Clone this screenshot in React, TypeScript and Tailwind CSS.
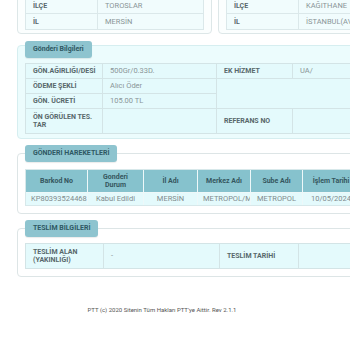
const font = { fontFamily: "Roboto, 'Noto Sans', sans-serif" };

function Legend({ title, className = "" }: { title: string; className?: string }) {
  return (
    <div
      className={`flex h-[17px] w-fit items-center rounded-[3px] bg-[#8ec4cf] px-[8px] text-[7px] font-bold text-[#2f5863] shadow-[0_1px_1px_rgba(0,0,0,0.08)] ${className}`}
    >
      {title}
    </div>
  );
}

const label = "flex items-center bg-[#e4fafc] px-[7px] text-[7px] font-bold leading-[8px] text-[#58686b]";
const value = "flex items-center bg-[#e4fafc] px-[7px] text-[7.5px] text-[#8a9597]";

function AddressCard({ ilce, il }: { ilce: string; il: string }) {
  return (
    <div className="w-[195px] shrink-0 overflow-hidden rounded-b-[4px] border border-[#dde7e8] bg-[#fbfefe] px-[7px] pt-[8px] pb-[3px]">
      <div className="grid grid-cols-[71px_1fr] gap-px border border-[#dbe8ea] bg-[#dbe8ea]">
        <div className="h-[15px] bg-[#f1fcfd]" />
        <div className="h-[15px] bg-[#f1fcfd]" />
        <div className={`${label} h-[15px] bg-[#f1fcfd]`}>İLÇE</div>
        <div className={`${value} h-[15px] bg-[#f1fcfd]`}>{ilce}</div>
        <div className={`${label} h-[15px] bg-[#f1fcfd]`}>İL</div>
        <div className={`${value} h-[15px] whitespace-nowrap bg-[#f1fcfd]`}>{il}</div>
      </div>
    </div>
  );
}

const moves = [
  ["KP80393524468", "Kabul Edildi", "MERSİN", "METROPOL/MERSİN", "METROPOL", "10/05/2024", ""],
];

export default function App() {
  return (
    <div className="h-[350px] w-[350px] overflow-hidden bg-white" style={font}>
      <div className="w-[440px] pl-[17px]">
        <div className="-mt-[28px] flex gap-[6px]">
          <AddressCard ilce="TOROSLAR" il="MERSİN" />
          <AddressCard ilce="KAĞITHANE" il="İSTANBUL(AVRUPA)" />
        </div>

        <div className="mt-[11px] rounded-[4px] border border-[#d6eef0] bg-[#ecfcfd] px-[7px] pb-[4px]">
          <Legend title="Gönderi Bilgileri" className="-mt-[5px]" />
          <div className="mt-[5px] grid grid-cols-[76px_113px_75px_1fr] grid-rows-[14px_14px_14px_24px] gap-px border border-[#d3e4e6] bg-[#d3e4e6]">
            <div className={label}>GÖN.AĞIRLIĞI/DESİ</div>
            <div className={value}>500Gr/0.33D.</div>
            <div className={label}>EK HİZMET</div>
            <div className={value}>UA/</div>
            <div className={label}>ÖDEME ŞEKLİ</div>
            <div className={value}>Alıcı Öder</div>
            <div className="col-span-2 row-span-2 bg-[#e4fafc]" />
            <div className={label}>GÖN. ÜCRETİ</div>
            <div className={value}>105.00 TL</div>
            <div className={label}>ÖN GÖRÜLEN TES. TAR</div>
            <div className={value} />
            <div className={label}>REFERANS NO</div>
            <div className={value} />
          </div>
        </div>

        <div className="mt-[14px] rounded-[4px] border border-[#dde5e6] bg-white px-[7px] pb-[7px]">
          <Legend title="GÖNDERİ HAREKETLERİ" className="-mt-[9px]" />
          <div className="mt-[7px] grid grid-cols-[61px_55px_53px_52px_51px_56px_1fr] gap-px border border-[#d7e8ea] bg-[#eef8f9]">
            {["Barkod No", "Gonderi Durum", "İl Adı", "Merkez Adı", "Sube Adı", "İşlem Tarihi", "İşlem Saati"].map((h) => (
              <div
                key={h}
                className="flex h-[22px] items-center justify-center whitespace-normal bg-[#86c2cd] px-[6px] text-center text-[7px] font-bold leading-[8px] text-[#35565e]"
              >
                {h}
              </div>
            ))}
            {moves.map((row) =>
              row.map((c, i) => (
                <div
                  key={i}
                  className="h-[12px] overflow-hidden whitespace-nowrap bg-[#e4fafc] px-[5px] text-center text-[7.5px] leading-[12px] text-[#7f8b8d]"
                >
                  {c}
                </div>
              ))
            )}
          </div>
        </div>

        <div className="mt-[14px] rounded-[4px] border border-[#dde5e6] bg-white px-[7px] pb-[7px]">
          <Legend title="TESLİM BİLGİLERİ" className="-mt-[9px]" />
          <div className="mt-[6px] grid grid-cols-[77px_115px_78px_1fr] gap-px border border-[#d3e4e6] bg-[#d3e4e6]">
            <div className={`${label} h-[24px]`}>TESLİM ALAN (YAKINLIĞI)</div>
            <div className={`${value} h-[24px]`}>-</div>
            <div className={`${label} h-[24px]`}>TESLİM TARİHİ</div>
            <div className={`${value} h-[24px]`} />
          </div>
        </div>

        <div className="-ml-[17px] mt-[28px] w-[324px] text-center text-[6px] text-[#555]">
          PTT (c) 2020 Sitenin Tüm Hakları PTT'ye Aittir. Rev 2.1.1
        </div>
      </div>
    </div>
  );
}
